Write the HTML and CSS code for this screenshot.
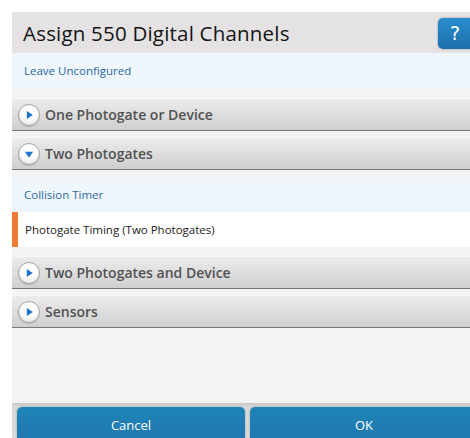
FILE: index.html
```html
<!DOCTYPE html>
<html lang="en">
<head>
<meta charset="utf-8">
<title>Assign 550 Digital Channels</title>
<link rel="stylesheet" href="styles.css">
</head>
<body>
<div class="dialog">
  <header class="dialog-header">
    <h1 class="dialog-title">Assign 550 Digital Channels</h1>
    <button class="help-btn" type="button">?</button>
  </header>

  <div class="dialog-body">
    <ul class="option-list">
      <li class="option option-link">Leave Unconfigured</li>
    </ul>

    <section class="group">
      <div class="group-header">
        <span class="toggle"><svg viewBox="0 0 10 10" width="12" height="12"><path d="M3.2 1.6 L8.2 5 L3.2 8.4 Z" fill="#1a74c9"/></svg></span>
        <span class="group-label">One Photogate or Device</span>
      </div>
    </section>

    <section class="group is-open">
      <div class="group-header">
        <span class="toggle"><svg viewBox="0 0 10 10" width="12" height="12"><path d="M1.6 3.2 L8.4 3.2 L5 8.2 Z" fill="#1a74c9"/></svg></span>
        <span class="group-label">Two Photogates</span>
      </div>
      <ul class="option-list group-items">
        <li class="option option-link">Collision Timer</li>
        <li class="option option-selected">Photogate Timing (Two Photogates)</li>
      </ul>
    </section>

    <section class="group">
      <div class="group-header">
        <span class="toggle"><svg viewBox="0 0 10 10" width="12" height="12"><path d="M3.2 1.6 L8.2 5 L3.2 8.4 Z" fill="#1a74c9"/></svg></span>
        <span class="group-label">Two Photogates and Device</span>
      </div>
    </section>

    <section class="group">
      <div class="group-header">
        <span class="toggle"><svg viewBox="0 0 10 10" width="12" height="12"><path d="M3.2 1.6 L8.2 5 L3.2 8.4 Z" fill="#1a74c9"/></svg></span>
        <span class="group-label">Sensors</span>
      </div>
    </section>
  </div>

  <footer class="dialog-footer">
    <button class="footer-btn" type="button">Cancel</button>
    <button class="footer-btn" type="button">OK</button>
  </footer>
</div>
</body>
</html>
```

FILE: styles.css
```css
* { box-sizing: border-box; }

html, body {
  margin: 0;
  padding: 0;
  background: #ffffff;
  overflow: hidden;
}

body {
  font-family: "Open Sans", "DejaVu Sans", sans-serif;
}

.dialog {
  margin: 12px 0 0 12px;
  width: 480px;
  height: 426px;
  display: flex;
  flex-direction: column;
  background: #f3f3f3;
}

/* title bar */
.dialog-header {
  height: 41px;
  flex: none;
  display: flex;
  align-items: center;
  justify-content: space-between;
  padding: 0 16px 0 11px;
  background: #e4e2e3;
}

.dialog-title {
  margin: 0;
  font-size: 20.5px;
  font-weight: normal;
  color: #141414;
  letter-spacing: 0.2px;
}

.help-btn {
  width: 38px;
  height: 31px;
  margin-top: 1px;
  border: none;
  border-radius: 5px;
  background: linear-gradient(#2b8fcf, #1b6fa9);
  box-shadow: 0 0 2px rgba(0, 0, 0, 0.45);
  color: #ffffff;
  font-family: "DejaVu Sans", sans-serif;
  font-size: 19px;
  padding: 0 0 1px 0;
  text-align: left;
  text-indent: 12px;
}

/* list area */
.dialog-body {
  flex: 1;
  display: flex;
  flex-direction: column;
}

.option-list {
  list-style: none;
  margin: 0 0 3px 0;
  padding: 0;
}

.option {
  height: 35px;
  display: flex;
  align-items: center;
  padding-left: 12px;
  font-size: 11.5px;
}

.option-link {
  background: #eff6fc;
  color: #2a69a3;
}

.option-selected {
  background: #ffffff;
  color: #222222;
  border-left: 6px solid #ef7a33;
  padding-left: 7px;
}

.group {
  margin-top: 7px;
}

.group + .group {
  margin-top: 6px;
}

.group-header {
  height: 33px;
  display: flex;
  align-items: center;
  gap: 5px;
  padding-left: 6px;
  border-top: 1px solid #f8f8f8;
  border-bottom: 1px solid #777777;
  background: linear-gradient(#ececec, #cfcfcf);
}

.group-label {
  font-size: 14px;
  font-weight: 600;
  color: #525252;
}

.toggle {
  width: 22px;
  height: 22px;
  border-radius: 50%;
  border: 1px solid #a4a4a4;
  background: radial-gradient(circle at 50% 35%, #ffffff 45%, #d8d8d8 100%);
  box-shadow: 0 1px 1px rgba(0, 0, 0, 0.15);
  display: flex;
  align-items: center;
  justify-content: center;
}

.group-items {
  margin-top: 7px;
}

/* button bar */
.dialog-footer {
  height: 35px;
  flex: none;
  display: flex;
  gap: 5px;
  padding: 4px 0 0 5px;
  background: linear-gradient(#c6c6c6, #d9d9d9 4px, #dadada);
}

.footer-btn {
  width: 228px;
  flex: none;
  height: 34px;
  border: none;
  border-radius: 5px 5px 0 0;
  background: linear-gradient(#1f84b8, #1f78ae);
  box-shadow: 0 0 2px rgba(0, 0, 0, 0.3);
  color: #ffffff;
  font-family: "Open Sans", sans-serif;
  font-size: 13px;
  padding: 2px 0 0 0;
}
```
